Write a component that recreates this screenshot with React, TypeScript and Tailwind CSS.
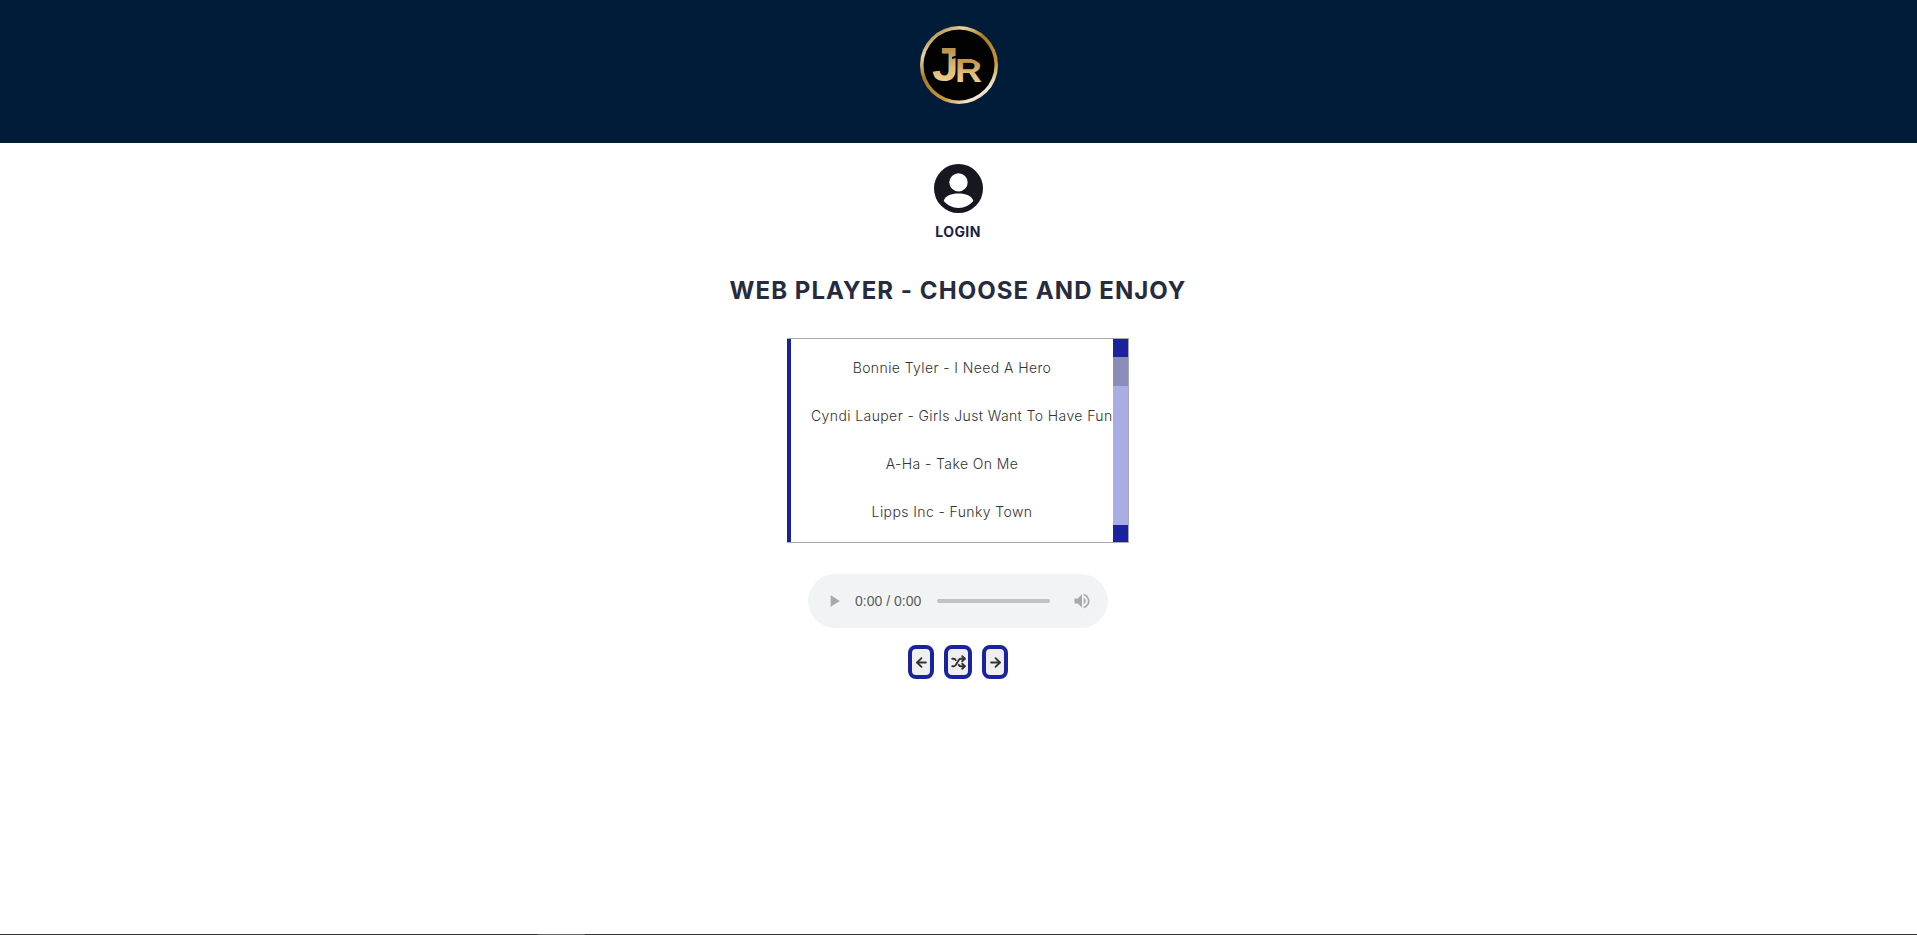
import { ArrowLeft, ArrowRight, Shuffle } from "lucide-react"

const musicas = [
  "Bonnie Tyler - I Need A Hero",
  "Cyndi Lauper - Girls Just Want To Have Fun",
  "A-Ha - Take On Me",
  "Lipps Inc - Funky Town",
]

function Logo() {
  return (
    <svg viewBox="0 0 78 78" className="w-[78px] h-[78px]">
      <defs>
        <linearGradient id="aro" x1="0.15" y1="0" x2="0.85" y2="1">
          <stop offset="0" stopColor="#8f6a22" />
          <stop offset="0.2" stopColor="#e9d3a0" />
          <stop offset="0.4" stopColor="#a87a22" />
          <stop offset="0.7" stopColor="#c9953a" />
          <stop offset="0.88" stopColor="#f2ead8" />
          <stop offset="1" stopColor="#b5842c" />
        </linearGradient>
        <linearGradient id="letra" x1="0" y1="0" x2="0" y2="1">
          <stop offset="0" stopColor="#a97c30" />
          <stop offset="0.6" stopColor="#e3bd78" />
          <stop offset="1" stopColor="#f3d69c" />
        </linearGradient>
      </defs>
      <circle cx="39" cy="39" r="39" fill="url(#aro)" />
      <circle cx="39" cy="39" r="35.5" fill="#020202" />
      <text x="12" y="55" fontFamily="Liberation Sans, sans-serif" fontWeight="700" fontSize="48" fill="url(#letra)">J</text>
      <text x="35" y="56" fontFamily="Liberation Sans, sans-serif" fontWeight="700" fontSize="34" textLength="27" lengthAdjust="spacingAndGlyphs" fill="url(#letra)">R</text>
      <path d="M32 31 C42 27 56 28 60 38 C54 32 44 30 32 33Z" fill="#020202" />
    </svg>
  )
}

function UserIcon() {
  return (
    <svg viewBox="0 0 48 48" className="w-[49px] h-[49px]">
      <circle cx="24" cy="24" r="24" fill="#16171f" />
      <circle cx="24" cy="18" r="9" fill="#ffffff" />
      <path d="M9.5 36 C11 31 17 29 24 29 C31 29 37 31 38.5 36 C35 40.5 30 43 24 43 C18 43 13 40.5 9.5 36Z" fill="#ffffff" />
    </svg>
  )
}

function App() {
  return (
    <div className="h-[935px] flex flex-col bg-white overflow-hidden font-['Inter',sans-serif]">
      {/* Header */}
      <header className="h-[143px] shrink-0 bg-[#001c38] flex justify-center pt-[26px] pl-px">
        <Logo />
      </header>

      <main className="flex-1 flex flex-col items-center pr-px">
        {/* Login */}
        <div className="mt-[21px] flex flex-col items-center">
          <UserIcon />
          <span className="mt-[9px] text-[14px] leading-[20px] font-bold tracking-[0.4px] text-[#1d2140]">LOGIN</span>
        </div>

        <h1 className="mt-[33px] text-[24px] leading-[32px] font-bold tracking-[1.05px] text-[#262b40]">
          WEB PLAYER - CHOOSE AND ENJOY
        </h1>

        {/* Lista de musicas */}
        <div className="mt-[31px] w-[342px] h-[205px] flex border border-[#a9a9a9] border-l-0">
          <div className="w-[4px] bg-[#1a239d]" />
          <ul className="w-[322px] overflow-hidden pt-[4px]">
            {musicas.map((musica) => (
              <li
                key={musica}
                className="h-[48px] px-5 flex items-center justify-center whitespace-nowrap text-[14px] font-light tracking-[0.4px] text-[#333333]"
              >
                <span className="block w-full text-center">{musica}</span>
              </li>
            ))}
          </ul>
          {/* Barra de rolagem */}
          <div className="w-[15px] flex flex-col bg-[#a9ade3]">
            <div className="h-[18px] bg-[#1a239d]" />
            <div className="h-[29px] bg-[#8a8db8]" />
            <div className="flex-1" />
            <div className="h-[17px] bg-[#1a239d]" />
          </div>
        </div>

        {/* Player */}
        <audio
          controls
          controlsList="nodownload noplaybackrate"
          className="mt-[31px] w-[300px] h-[54px] [&::-webkit-media-controls-current-time-display]:font-['Liberation_Sans',sans-serif] [&::-webkit-media-controls-current-time-display]:text-[#444444] [&::-webkit-media-controls-time-remaining-display]:font-['Liberation_Sans',sans-serif] [&::-webkit-media-controls-time-remaining-display]:text-[#444444]"
        />

        <div className="mt-[17px] flex gap-[10px]">
          <button className="w-[26px] h-[34px] flex items-center justify-center rounded-[8px] border-4 border-[#1a239d] bg-[#efefef] text-[#333333]">
            <ArrowLeft strokeWidth={3} className="w-[15px] h-[15px] shrink-0" />
          </button>
          <button className="w-[28px] h-[34px] flex items-center justify-center rounded-[8px] border-4 border-[#1a239d] bg-[#efefef] text-[#333333]">
            <Shuffle strokeWidth={3} className="w-[15px] h-[15px] shrink-0" />
          </button>
          <button className="w-[26px] h-[34px] flex items-center justify-center rounded-[8px] border-4 border-[#1a239d] bg-[#efefef] text-[#333333]">
            <ArrowRight strokeWidth={3} className="w-[15px] h-[15px] shrink-0" />
          </button>
        </div>
      </main>

      {/* Linha inferior */}
      <footer className="h-px shrink-0 flex bg-[#333333]">
        <div className="w-[538px]" />
        <div className="w-[47px] bg-[#666666]" />
      </footer>
    </div>
  )
}

export default App
